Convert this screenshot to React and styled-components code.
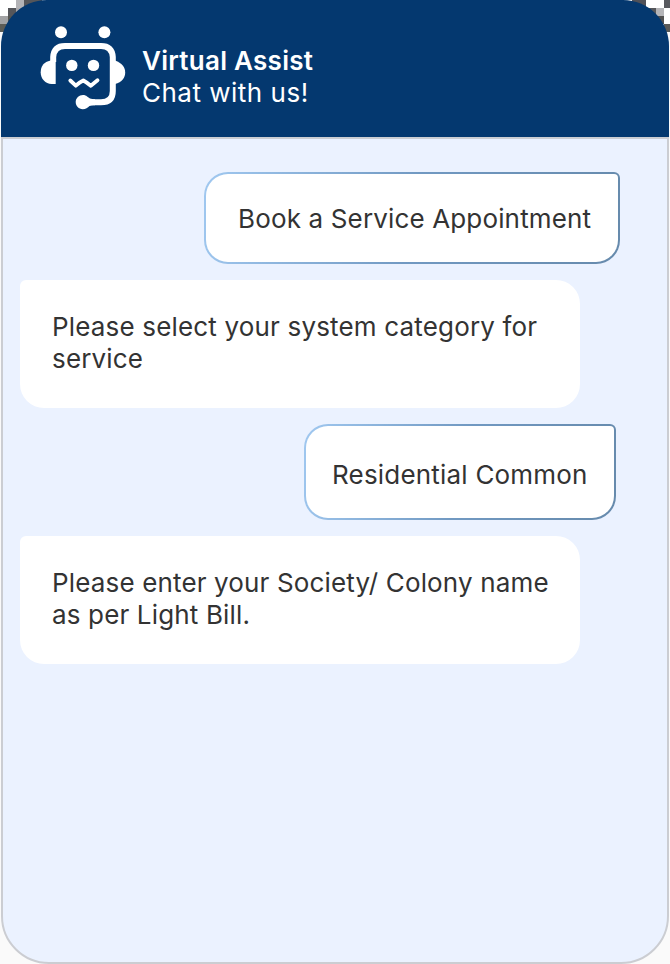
import React from "react";
import styled, { createGlobalStyle } from "styled-components";

const GlobalStyle = createGlobalStyle`
  * { box-sizing: border-box; }
  html, body { margin: 0; overflow: hidden; }
  body { background: #fafafa; font-family: "Inter", sans-serif; }
`;

const block = (color, x, y, w = 8, h = 8) =>
  `linear-gradient(${color}, ${color}) ${x}px ${y}px / ${w}px ${h}px no-repeat`;

const cornerPixels = [
  block("#ffffff", 0, 0, 16),
  block("#b3b3b6", 16, 0),
  block("#55565a", 24, 0, 18),
  block("#ffffff", 0, 8),
  block("#55565a", 8, 8),
  block("#aaaaae", 16, 8),
  block("#a3a3a4", 0, 16),
  block("#55554f", 8, 16),
  block("#5c5c56", 0, 24),
  block("#505158", 632, 0, 14),
  block("#ffffff", 646, 0, 18),
  block("#58595e", 664, 0),
  block("#55565a", 646, 8, 10),
  block("#b5b5b8", 656, 8),
  block("#ffffff", 664, 8),
  block("#505050", 656, 16),
  block("#ffffff", 664, 16),
  block("#5a5a58", 664, 24),
].join(", ");

const Page = styled.main`
  height: 964px;
  width: 670px;
  padding: 0 1px;
  background: ${cornerPixels}, #fafafa;
`;

const ChatWindow = styled.section`
  height: 964px;
  display: flex;
  flex-direction: column;
`;

const Header = styled.header`
  height: 137px;
  flex: none;
  display: flex;
  align-items: flex-start;
  padding: 16px 29px 0;
  gap: 2px;
  background: #04386f;
  border-radius: 46px 46px 0 0;
`;

const RobotIcon = styled.svg`
  width: 110px;
  height: 104px;
  flex: none;
`;

const Heading = styled.div`
  padding-top: 29px;
  color: #fff;
  font-size: 26px;
  line-height: 32px;
`;

const Title = styled.h1`
  margin: 0;
  font: inherit;
  font-weight: 600;
  letter-spacing: 0.27px;
`;

const Subtitle = styled.p`
  margin: 0;
  letter-spacing: 0.5px;
`;

const Conversation = styled.div`
  flex: 1;
  display: flex;
  flex-direction: column;
  align-items: flex-start;
  gap: 16px;
  padding: 33px 17px 0;
  background: #ebf2ff;
  border: 2px solid #cbcdd2;
  border-radius: 0 0 48px 48px;
`;

const Bubble = styled.div`
  color: #333;
  font-size: 26px;
  line-height: 32px;
  letter-spacing: ${(p) => p.$tracking ?? 0.15}px;
  white-space: nowrap;
`;

const BotBubble = styled(Bubble)`
  width: 560px;
  height: 128px;
  padding: 31px 32px;
  background: #fff;
  border-radius: 6px 24px 24px 24px;
`;

const UserBubble = styled(Bubble)`
  align-self: flex-end;
  width: ${(p) => p.$width}px;
  height: ${(p) => p.$height}px;
  margin-right: ${(p) => p.$inset}px;
  padding: ${(p) => p.$top}px 0 0 ${(p) => p.$left}px;
  border: 2px solid transparent;
  border-radius: 24px 6px 24px 24px;
  background:
    linear-gradient(#fff, #fff) padding-box,
    linear-gradient(100deg, #a0c8f0 0%, #7199c2 50%, #668aac 100%) border-box;
`;

function Robot() {
  return (
    <RobotIcon viewBox="30 16 110 104" fill="#fff" aria-hidden="true">
      <circle cx="61" cy="32.2" r="6" />
      <circle cx="104.4" cy="32.2" r="6" />
      <circle cx="71.8" cy="65.4" r="5.7" />
      <circle cx="93.5" cy="65.4" r="5.7" />
      <path
        d="M53.2 62V57Q54 46 65 46H101Q112 46 112.8 57V91Q112.8 102.3 101 102.3H88"
        fill="none"
        stroke="#fff"
        strokeWidth="6"
      />
      <path d="M50.5 60.5C44 62 40.7 66 40.7 72.3C40.7 79 45.5 84 51.5 84H55.7V60Z" />
      <path d="M115 60.5C122 63 125.2 67 125.2 72.5C125.2 78 122 82 115 84Z" />
      <path d="M83 95C86.5 95 88 97.5 90 98.5Q92 99.3 95 99.3V105.3Q91.5 105 89.5 106C87.5 107.5 86 109.2 82.7 109.2C78.7 109.2 75.7 106 75.7 102.1C75.7 98.2 79 95 83 95Z" />
      <path
        d="M70.3 80.5L75.8 85.7Q79 82.5 83.3 80.5Q87 82.5 90.8 85.7L97.5 80.2"
        fill="none"
        stroke="#fff"
        strokeWidth="3.8"
        strokeLinecap="round"
        strokeLinejoin="round"
      />
    </RobotIcon>
  );
}

export default function App() {
  return (
    <>
      <GlobalStyle />
      <Page>
        <ChatWindow>
          <Header>
            <Robot />
            <Heading>
              <Title>Virtual Assist</Title>
              <Subtitle>Chat with us!</Subtitle>
            </Heading>
          </Header>
          <Conversation>
            <UserBubble $width={416} $height={92} $inset={30} $top={29} $left={32}>
              Book a Service Appointment
            </UserBubble>
            <BotBubble $tracking={0.17}>
              Please select your system category for
              <br />
              service
            </BotBubble>
            <UserBubble $width={312} $height={96} $inset={34} $top={33} $left={26} $tracking={0.2}>
              Residential Common
            </UserBubble>
            <BotBubble>
              Please enter your Society/ Colony name
              <br />
              as per Light Bill.
            </BotBubble>
          </Conversation>
        </ChatWindow>
      </Page>
    </>
  );
}
